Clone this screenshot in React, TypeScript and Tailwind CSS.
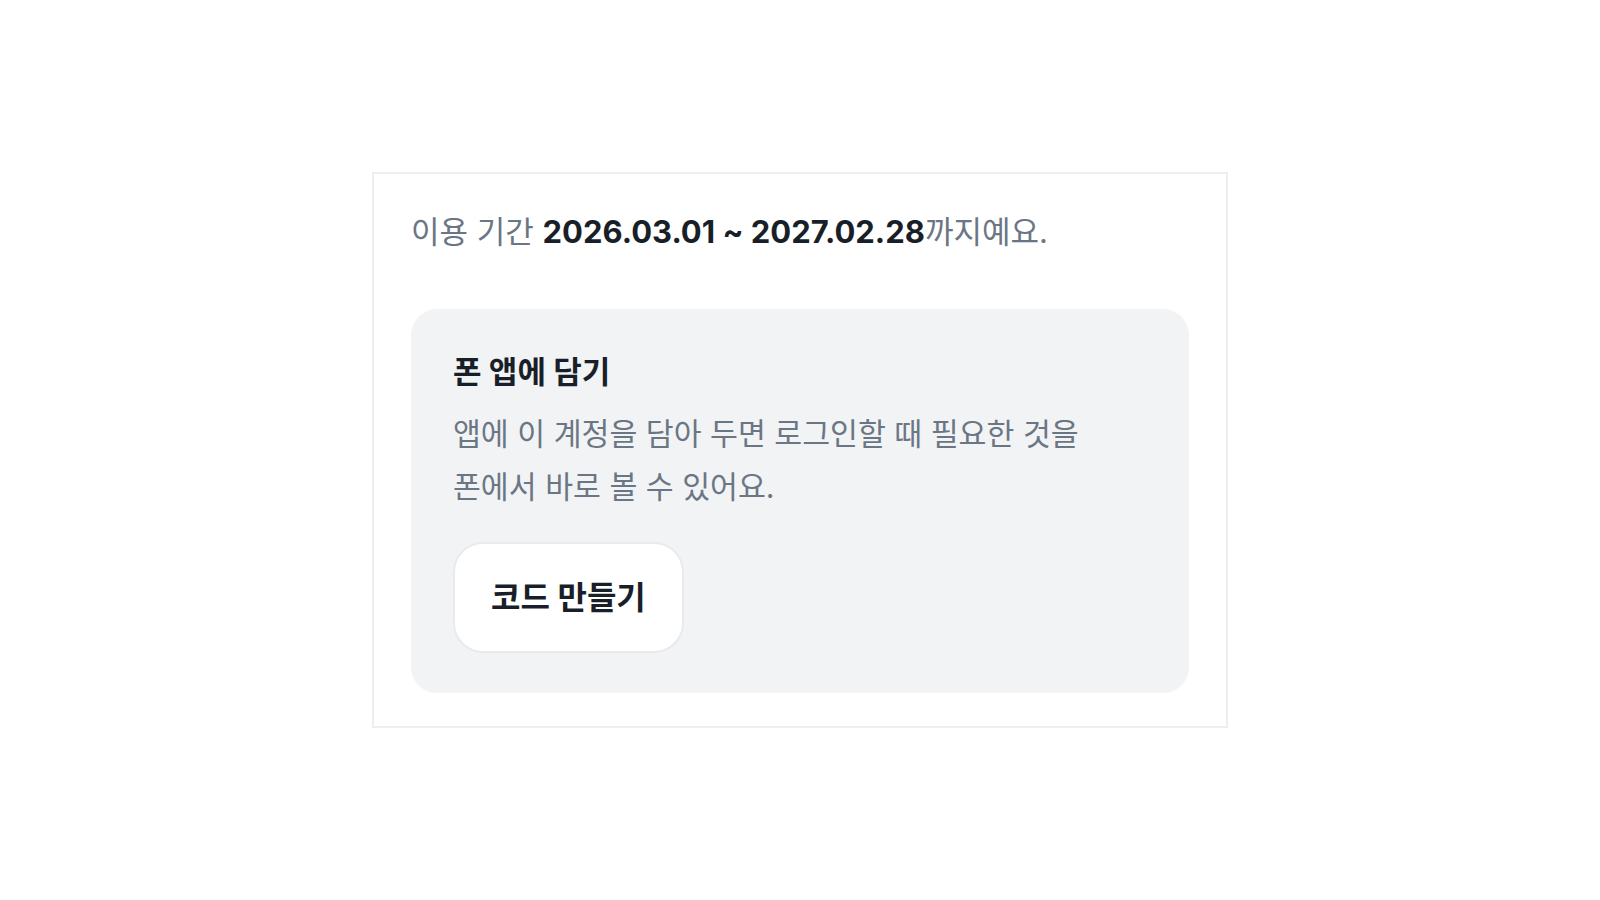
export default function App() {
  return (
    <div
      className="flex min-h-screen items-center justify-center bg-white"
      style={{ fontFamily: '"Inter", "Noto Sans CJK KR", sans-serif' }}
    >
      <section className="w-[856px] border-2 border-[#eceef1] bg-white px-[37px] pb-[33px] pt-[38px]">
        <p className="text-[31px] leading-[40px] text-[#6b7684]">
          이용 기간{" "}
          <span className="font-bold text-[#191f28]">2026.03.01 ~ 2027.02.28</span>
          까지예요.
        </p>

        <div className="mt-[57px] rounded-[26px] bg-[#f2f3f5] px-[42px] pb-[40px] pt-[43px]">
          <h2 className="text-[31px] font-bold leading-[40px] text-[#191f28]">
            폰 앱에 담기
          </h2>
          <p className="mt-[16px] text-[30.3px] leading-[53px] text-[#6b7684]">
            앱에 이 계정을 담아 두면 로그인할 때 필요한 것을
            <br />
            폰에서 바로 볼 수 있어요.
          </p>
          <button
            type="button"
            className="mt-[28px] flex h-[111px] items-center rounded-[30px] border-2 border-[#e8eaed] bg-white px-[36px] text-[32px] font-bold text-[#191f28]"
          >
            코드 만들기
          </button>
        </div>
      </section>
    </div>
  );
}
